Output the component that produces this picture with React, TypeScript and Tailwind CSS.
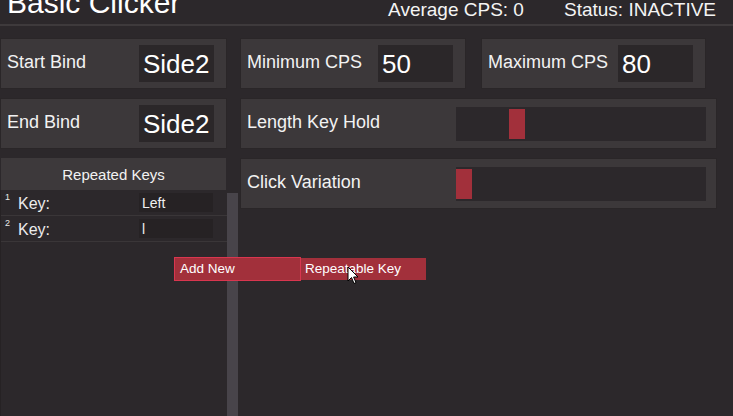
import { ReactNode } from "react";

const font = { fontFamily: '"Liberation Sans", Arial, sans-serif' };

function ValuePanel({ label, value, width }: { label: string; value: string; width: string }) {
  return (
    <div
      className={`${width} h-[51px] flex items-center justify-between pl-[6px] pr-[12px] bg-[#3c383a] border border-[#2a2628]`}
    >
      <span className="mt-[-3px] text-[18px] leading-[18px] text-[#f2f2f2]">{label}</span>
      <div className="w-[75px] h-[37px] bg-[#2b2729] flex items-center pl-[4px]">
        <span className="text-[26px] leading-[26px] text-white">{value}</span>
      </div>
    </div>
  );
}

function SliderPanel({ label, thumb }: { label: string; thumb: number }) {
  return (
    <div className="w-[477px] h-[51px] flex items-center justify-between pl-[6px] pr-[10px] bg-[#3c383a] border border-[#2a2628]">
      <span className="mt-[-3px] text-[18px] leading-[18px] text-[#f2f2f2]">{label}</span>
      <div className="relative w-[250px] h-[34px] bg-[#2c282b]">
        <div
          className="absolute top-[2px] w-[16px] h-[30px] bg-[#a2303b]"
          style={{ left: thumb }}
        />
      </div>
    </div>
  );
}

function KeyRow({ n, value }: { n: number; value: ReactNode }) {
  return (
    <div className="relative h-[26px] flex items-center border-b border-[#3a3638]">
      <span className="absolute left-[4px] top-[3px] text-[9px] leading-[9px] text-[#e8e8e8]">{n}</span>
      <span className="ml-[17px] mt-[3px] text-[16px] leading-[16px] text-[#ececec]">Key:</span>
      <div className="ml-auto mr-[14px] w-[74px] h-[19px] bg-[#262224] flex items-center pl-[3px]">
        <span className="text-[14px] leading-[14px] text-[#f0f0f0]">{value}</span>
      </div>
    </div>
  );
}

export default function App() {
  return (
    <div
      className="relative w-[733px] h-[416px] overflow-hidden bg-[#2c282b] flex flex-col select-none"
      style={font}
    >
      {/* header */}
      <div className="h-[24px] flex items-start shrink-0">
        <span className="ml-[7px] mt-[-12px] text-[30px] leading-[30px] text-white whitespace-nowrap">
          Basic Clicker
        </span>
        <div className="ml-auto mr-[17px] flex gap-[40px]">
          <span className="text-[19px] leading-[19px] text-[#f4f4f4]">Average CPS: 0</span>
          <span className="text-[19px] leading-[19px] text-[#f4f4f4]">Status: INACTIVE</span>
        </div>
      </div>
      <div className="h-[2px] bg-[#3e3a3c] shrink-0" />

      {/* body */}
      <div className="flex-1 min-h-0 flex pt-[12px]">
        <div className="w-[238px] flex flex-col gap-[9px]">
          <ValuePanel label="Start Bind" value="Side2" width="w-[227px]" />
          <ValuePanel label="End Bind" value="Side2" width="w-[227px]" />
          <div className="flex-1 min-h-0 flex flex-col">
            <div className="ml-[1px] w-[225px] h-[32px] bg-[#3d393b] flex items-center justify-center">
              <span className="text-[15px] leading-[15px] text-[#f2f2f2]">Repeated Keys</span>
            </div>
            <div className="flex-1 min-h-0 flex">
              <div className="w-[227px] border-l border-[#262224]">
                <KeyRow n={1} value="Left" />
                <KeyRow n={2} value="l" />
              </div>
              <div className="w-[11px] mt-[3px] bg-[#48444a]" />
            </div>
          </div>
        </div>

        <div className="ml-[2px] flex flex-col gap-[9px]">
          <div className="flex gap-[15px]">
            <ValuePanel label="Minimum CPS" value="50" width="w-[226px]" />
            <ValuePanel label="Maximum CPS" value="80" width="w-[225px]" />
          </div>
          <SliderPanel label="Length Key Hold" thumb={53} />
          <SliderPanel label="Click Variation" thumb={0} />
        </div>
      </div>

      {/* add new hover button */}
      <div className="absolute left-[174px] top-[257px] flex items-center">
        <div className="w-[127px] h-[24px] bg-[#a2303b] border border-[#d9364f] flex items-center pl-[5px]">
          <span className="text-[13.5px] leading-[14px] text-white">Add New</span>
        </div>
        <div className="w-[125px] h-[22px] bg-[#a2303b] flex items-center pl-[4px]">
          <span className="text-[13.5px] leading-[14px] text-white whitespace-nowrap">Repeatable Key</span>
        </div>
      </div>

      {/* mouse cursor */}
      <svg
        className="absolute left-[347px] top-[266px]"
        width="12"
        height="19"
        viewBox="0 0 12 19"
      >
        <path
          d="M1 1 L1 15 L4.5 11.5 L7 17.5 L9 16.6 L6.6 11 L11 11 Z"
          fill="#ffffff"
          stroke="#000000"
          strokeWidth="1"
          strokeLinejoin="miter"
        />
      </svg>
    </div>
  );
}
